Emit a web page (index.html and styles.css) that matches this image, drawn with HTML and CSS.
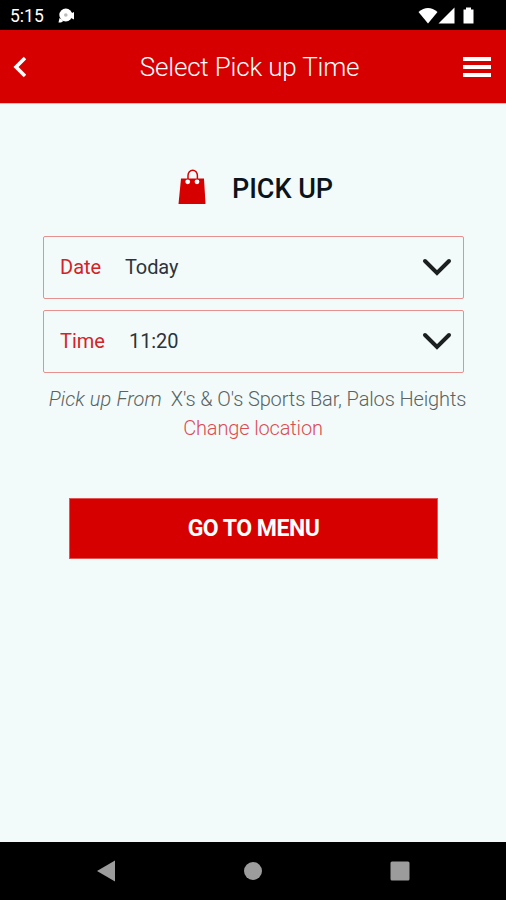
FILE: index.html
```html
<!DOCTYPE html>
<html lang="en">
<head>
  <meta charset="UTF-8">
  <meta name="viewport" content="width=device-width, initial-scale=1.0">
  <title>Select Pick up Time</title>
  <link rel="stylesheet" href="styles.css">
</head>
<body>
  <div class="status-bar">
    <span class="clock">5:15</span>
    <svg class="notification" width="18" height="16" viewBox="0 0 18 16">
      <circle cx="7.800" cy="7" r="6.500" fill="#fff"/>
      <path d="M1.500 10l4 3-2.500 1.500H.500zM12 6l4-2v7.500l-4-2z" fill="#fff"/>
      <circle cx="7.800" cy="7" r="1.800" fill="#bbb"/>
    </svg>
    <svg class="signals" width="58" height="18" viewBox="0 0 58 18" fill="#fff">
      <path d="M.500 5Q10 -3 19.500 5L10 16.500z"/>
      <path d="M36.500 .500v16H20.500z"/>
      <path d="M45.500 2.500h2.500V.500h5v2h2.500v14h-10z"/>
    </svg>
  </div>

  <header class="header">
    <svg class="back" width="14" height="22" viewBox="0 0 14 22">
      <path d="M13 2L4 11l9 9" fill="none" stroke="#fff" stroke-width="3.600"/>
    </svg>
    <h1 class="title">Select Pick up Time</h1>
    <div class="menu">
      <span></span>
      <span></span>
      <span></span>
    </div>
  </header>

  <main class="content">
    <div class="pickup">
      <svg width="28" height="36" viewBox="0 0 28 36">
        <path d="M3 9.500h23L27.500 35H.500z" fill="#d60000"/>
        <path d="M10 12V6.500a4.700 5.300 0 0 1 9.400 0V12" fill="none" stroke="#d60000" stroke-width="1.500"/>
        <circle cx="9.700" cy="12.800" r="2.400" fill="#fff"/>
        <circle cx="19" cy="12.800" r="2.400" fill="#fff"/>
      </svg>
      <h2 class="pickup-title">PICK UP</h2>
    </div>

    <div class="field">
      <span class="label">Date</span>
      <span class="value">Today</span>
      <svg class="arrow" width="30" height="18" viewBox="0 0 30 18">
        <path d="M3 3l12 12L27 3" fill="none" stroke="#1b1f1f" stroke-width="4" stroke-linecap="round"/>
      </svg>
    </div>
    <div class="field">
      <span class="label">Time</span>
      <span class="value time">11:20</span>
      <svg class="arrow" width="30" height="18" viewBox="0 0 30 18">
        <path d="M3 3l12 12L27 3" fill="none" stroke="#1b1f1f" stroke-width="4" stroke-linecap="round"/>
      </svg>
    </div>

    <p class="location"><em>Pick up From</em><span>X's &amp; O's Sports Bar, Palos Heights</span></p>
    <a class="change">Change location</a>
    <button class="go">GO TO MENU</button>
  </main>

  <nav class="nav-bar">
    <svg width="18" height="22" viewBox="0 0 18 22"><path d="M0 11L18 .500v21z" fill="#9c9c9c"/></svg>
    <svg width="18" height="22" viewBox="0 0 18 22"><circle cx="9" cy="11" r="9" fill="#9c9c9c"/></svg>
    <svg width="20" height="22" viewBox="0 0 20 22"><rect x=".500" y="1.500" width="19" height="19" rx="1.500" fill="#9c9c9c"/></svg>
  </nav>
</body>
</html>
```
FILE: styles.css
```css
* {
  box-sizing: border-box;
}
body {
  display: flex;
  flex-direction: column;
  height: 900px;
  margin: 0;
  overflow: hidden;
  background-color: #f3fbfa;
  font-family: Roboto, sans-serif;
}
.status-bar {
  display: flex;
  align-items: flex-start;
  height: 30px;
  padding: 7px 30px 0 10px;
  background-color: #000;
}
.clock {
  width: 48px;
  color: #fff;
  font-size: 17.5px;
  line-height: 19px;
}
.notification {
  margin-top: 1px;
}
.signals {
  margin-left: auto;
}
.header {
  display: flex;
  justify-content: space-between;
  align-items: center;
  height: 74px;
  padding: 0 15px 0 12px;
  border-bottom: 1px solid #eeb5b5;
  background-color: #d60000;
}
.back {
  margin-right: 10px;
}
.title {
  margin: 0;
  color: #fff;
  font-size: 26px;
  font-weight: 300;
  letter-spacing: -0.18px;
  line-height: 30px;
}
.menu {
  display: flex;
  flex-direction: column;
  gap: 4px;
  width: 28px;
}
.menu span {
  height: 4px;
  background-color: #fff;
}
.content {
  display: flex;
  flex: 1;
  flex-direction: column;
  align-items: center;
  padding-top: 65px;
}
.pickup {
  display: flex;
  align-items: center;
  gap: 26px;
  height: 36px;
  margin-bottom: 31px;
  margin-left: 5px;
}
.pickup-title {
  margin: 4px 0 0;
  color: #0c141b;
  font-size: 27px;
  font-weight: 500;
}
.field {
  display: flex;
  align-items: center;
  width: 421px;
  height: 63px;
  margin-bottom: 11px;
  margin-left: 1px;
  padding: 0 11px 2px 16px;
  border: 1px solid #e69090;
  border-radius: 2px;
  font-size: 20px;
}
.label {
  width: 65px;
  color: #d3222a;
}
.value {
  color: #2c3439;
  letter-spacing: -0.1px;
}
.time {
  padding-left: 4px;
}
.arrow {
  margin-left: auto;
}
.location {
  display: flex;
  gap: 9px;
  margin: 3px 0 0 9px;
  color: #596363;
  font-size: 20px;
  font-weight: 300;
  line-height: 24px;
  white-space: nowrap;
}
.location em {
  letter-spacing: 0.1px;
}
.location span {
  letter-spacing: -0.12px;
}
.change {
  margin-top: 5px;
  color: #dc4c54;
  font-size: 20px;
  font-weight: 300;
  letter-spacing: -0.15px;
  line-height: 25px;
}
.go {
  width: 369px;
  height: 61px;
  margin-top: 57px;
  margin-left: 1px;
  padding: 0;
  border: 1px solid #e35555;
  background-color: #d60000;
  color: #fff;
  font-family: inherit;
  font-size: 23px;
  font-weight: 700;
  letter-spacing: -0.5px;
}
.nav-bar {
  display: flex;
  justify-content: space-between;
  align-items: center;
  height: 58px;
  padding: 0 96px 0 97px;
  background-color: #000;
}
```
